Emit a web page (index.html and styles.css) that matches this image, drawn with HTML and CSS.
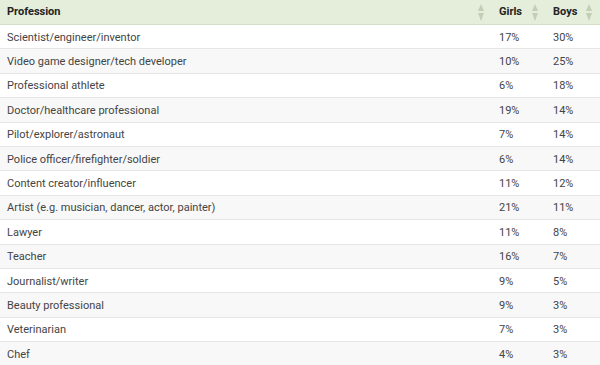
FILE: index.html
```html
<!DOCTYPE html>
<html>
<head>
  <title>Professions</title>
  <meta name="viewport" content="width=device-width, initial-scale=1.0">
  <link rel="stylesheet" href="styles.css">
</head>
<body>
  <table class="data-table">
    <colgroup>
      <col class="col-name">
      <col class="col-num">
      <col class="col-num">
    </colgroup>
    <thead>
      <tr>
        <th><span class="th-label">Profession</span><span class="sort"></span></th>
        <th><span class="th-label">Girls</span><span class="sort"></span></th>
        <th><span class="th-label">Boys</span><span class="sort"></span></th>
      </tr>
    </thead>
    <tbody>
      <tr><td>Scientist/engineer/inventor</td><td>17%</td><td>30%</td></tr>
      <tr><td>Video game designer/tech developer</td><td>10%</td><td>25%</td></tr>
      <tr><td>Professional athlete</td><td>6%</td><td>18%</td></tr>
      <tr><td>Doctor/healthcare professional</td><td>19%</td><td>14%</td></tr>
      <tr><td>Pilot/explorer/astronaut</td><td>7%</td><td>14%</td></tr>
      <tr><td>Police officer/firefighter/soldier</td><td>6%</td><td>14%</td></tr>
      <tr><td>Content creator/influencer</td><td>11%</td><td>12%</td></tr>
      <tr><td>Artist (e.g. musician, dancer, actor, painter)</td><td>21%</td><td>11%</td></tr>
      <tr><td>Lawyer</td><td>11%</td><td>8%</td></tr>
      <tr><td>Teacher</td><td>16%</td><td>7%</td></tr>
      <tr><td>Journalist/writer</td><td>9%</td><td>5%</td></tr>
      <tr><td>Beauty professional</td><td>9%</td><td>3%</td></tr>
      <tr><td>Veterinarian</td><td>7%</td><td>3%</td></tr>
      <tr><td>Chef</td><td>4%</td><td>3%</td></tr>
    </tbody>
  </table>
</body>
</html>
```
FILE: styles.css
```css
body {
  margin: 0;
  background-color: #fff;
  font-family: Roboto, "Liberation Sans", sans-serif;
  overflow: hidden;
}

.data-table {
  width: 600px;
  border-collapse: collapse;
  table-layout: fixed;
  font-size: 11px;
  color: #444;
}

.col-name {
  width: 492px;
}

.col-num {
  width: 54px;
}

.data-table th {
  height: 24px;
  padding: 0 7px;
  text-align: left;
  background-color: #e4eedb;
  border-bottom: 1px solid #d3dcc9;
  color: #222;
  font-weight: bold;
  position: relative;
}

.th-label {
  display: inline-block;
  line-height: 24px;
}

.sort {
  position: absolute;
  right: 7px;
  top: 4px;
  width: 7px;
  height: 17px;
}

.sort:before,
.sort:after {
  content: "";
  position: absolute;
  left: 0;
  border-left: 3.5px solid transparent;
  border-right: 3.5px solid transparent;
}

.sort:before {
  top: 0;
  border-bottom: 7px solid #c2cfb6;
}

.sort:after {
  bottom: 0;
  border-top: 8px solid #c2cfb6;
}

.data-table td {
  height: 22.4px;
  padding: 1px 7px 0;
  border-bottom: 1px solid #e6e6e6;
  white-space: nowrap;
}

.data-table tbody tr:nth-child(even) td {
  background-color: #f8f8f8;
}
```
